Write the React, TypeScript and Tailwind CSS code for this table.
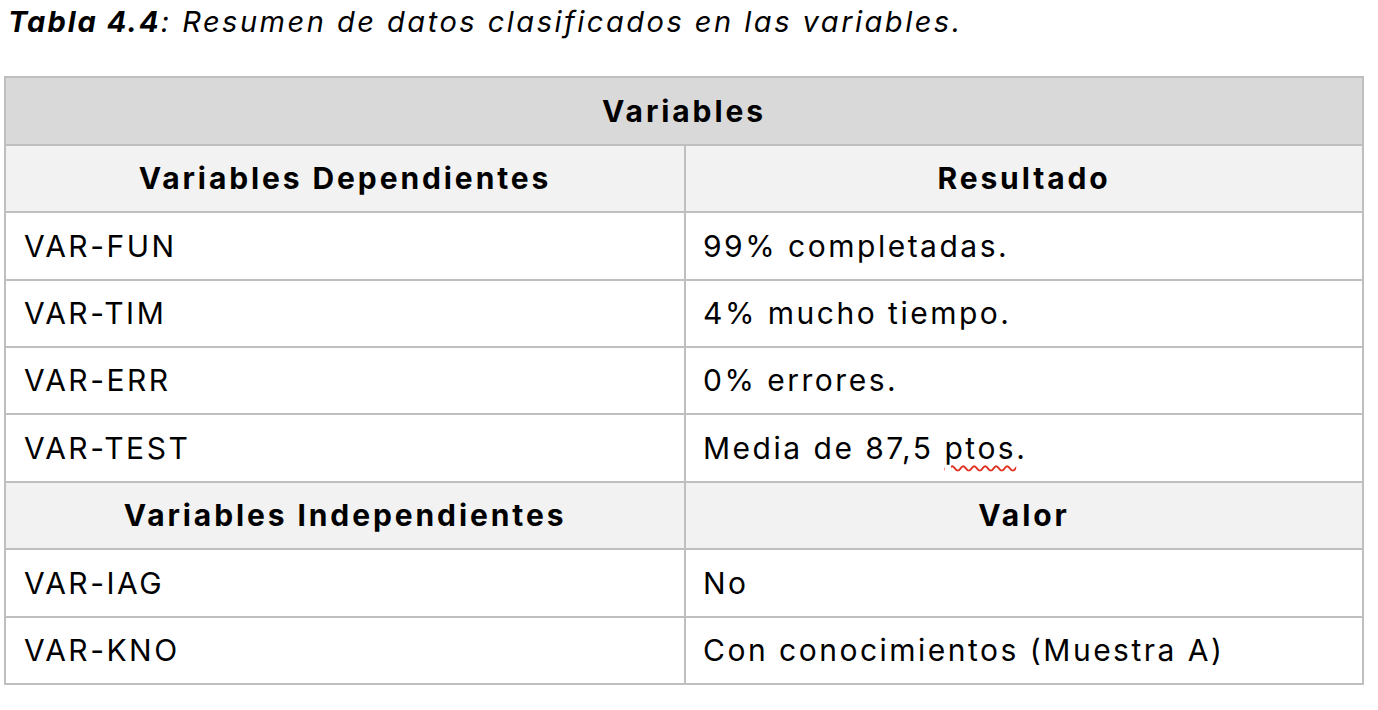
import React from "react";

const font = { fontFamily: "Inter, 'Noto Sans', sans-serif" };

export default function App() {
  const dep = [
    ["VAR-FUN", "99% completadas.", "h-[66px]"],
    ["VAR-TIM", "4% mucho tiempo.", "h-[65px]"],
    ["VAR-ERR", "0% errores.", "h-[65px]"],
    ["VAR-TEST", "__ptos", "h-[66px]"],
  ];
  const ind = [
    ["VAR-IAG", "No", "h-[66px]"],
    ["VAR-KNO", "Con conocimientos (Muestra A)", "h-[65px]"],
  ];
  return (
    <div className="w-[1378px] h-[710px] bg-white text-black" style={font}>
      <div className="pl-[8px] pt-[4px] h-[76px] text-[29px] italic leading-[36px] tracking-[2.5px]">
        <span className="font-bold tracking-[2px]">Tabla 4.4</span>: Resumen de datos clasificados en las variables.
      </div>
      <div className="ml-[4px] w-[1360px] bg-[#bfbfbf] p-[2px] grid grid-cols-[678px_676px] gap-[2px] text-[30px] tracking-[2.5px]">
        <div className="col-span-2 h-[66px] bg-[#d9d9d9] flex items-center justify-center font-bold tracking-[2.9px]">Variables</div>
        <div className="h-[65px] bg-[#f2f2f2] flex items-center justify-center font-bold tracking-[2.9px]">Variables Dependientes</div>
        <div className="h-[65px] bg-[#f2f2f2] flex items-center justify-center font-bold tracking-[2.9px]">Resultado</div>
        {dep.map(([a, b, h]) => (
          <React.Fragment key={a}>
            <div className={`${h} bg-white flex items-center pl-[18px]`}>{a}</div>
            <div className={`${h} bg-white flex items-center pl-[17px]`}>
              {b === "__ptos" ? (
                <span>
                  Media de 87,5{" "}
                  <span className="underline decoration-wavy decoration-[#e03020] decoration-[1.5px] underline-offset-[6px]">ptos</span>.
                </span>
              ) : (
                b
              )}
            </div>
          </React.Fragment>
        ))}
        <div className="h-[65px] bg-[#f2f2f2] flex items-center justify-center font-bold tracking-[2.9px]">Variables Independientes</div>
        <div className="h-[65px] bg-[#f2f2f2] flex items-center justify-center font-bold tracking-[2.9px]">Valor</div>
        {ind.map(([a, b, h]) => (
          <React.Fragment key={a}>
            <div className={`${h} bg-white flex items-center pl-[18px]`}>{a}</div>
            <div className={`${h} bg-white flex items-center pl-[17px]`}>{b}</div>
          </React.Fragment>
        ))}
      </div>
    </div>
  );
}
